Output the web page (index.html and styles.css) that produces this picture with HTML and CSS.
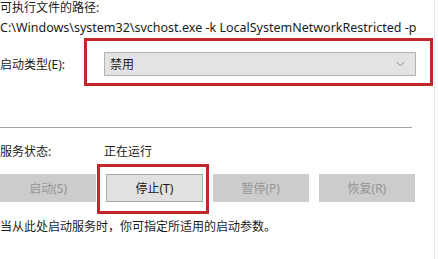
FILE: index.html
```html
<!DOCTYPE html>
<html lang="zh-CN">
<head>
    <meta charset="UTF-8">
    <title>服务属性</title>
    <link rel="stylesheet" href="styles.css">
</head>
<body>
    <div class="dialog">
        <div class="path-label">可执行文件的路径:</div>
        <div class="path">C:\Windows\system32\svchost.exe -k LocalSystemNetworkRestricted -p</div>

        <div class="row type-row">
            <label>启动类型(E):</label>
            <div class="select">
                <span>禁用</span>
                <svg class="chevron" width="9" height="6" viewBox="0 0 9 6"><path d="M0.5 0.8 L4.5 4.8 L8.5 0.8" fill="none" stroke="#8a8a8a" stroke-width="1"/></svg>
            </div>
        </div>

        <div class="divider"></div>

        <div class="row status-row">
            <span>服务状态:</span>
            <span>正在运行</span>
        </div>

        <div class="buttons">
            <button disabled>启动(S)</button>
            <button class="active">停止(T)</button>
            <button disabled>暂停(P)</button>
            <button disabled>恢复(R)</button>
        </div>

        <div class="hint">当从此处启动服务时，你可指定所适用的启动参数。</div>

        <!-- red annotation boxes -->
        <div class="mark mark-type"></div>
        <div class="mark mark-stop"></div>
    </div>
    <div class="edge"></div>
</body>
</html>
```

FILE: styles.css
```css
body {
    margin: 0;
    background: #fff;
    color: #1b1b1b;
    font-family: "Noto Sans", "Noto Sans CJK SC", sans-serif;
    font-size: 12px;
    width: 438px;
    height: 259px;
    overflow: hidden;
    position: relative;
}
.dialog {
    position: relative;
    width: 416px;
    padding-top: 1px;
}
.path-label {
    height: 14px;
    line-height: 14px;
}
.path {
    margin-top: 6px;
    height: 14px;
    line-height: 14px;
    font-size: 12.5px;
    white-space: nowrap;
}
.row {
    display: grid;
    grid-template-columns: 104px 1fr;
    align-items: center;
}
.type-row {
    margin-top: 17px;
}
.select {
    height: 22px;
    background: #e3e3e3;
    border: 1px solid #b3b3b3;
    display: flex;
    align-items: center;
    justify-content: space-between;
    padding: 0 10px 0 5px;
}
.chevron {
    display: block;
}
.divider {
    margin-top: 51px;
    width: 412px;
    height: 1px;
    background: #a5a5a5;
}
.status-row {
    margin-top: 14px;
    height: 16px;
}
.buttons {
    margin-top: 16px;
    width: 415px;
    display: grid;
    grid-template-columns: repeat(4, 1fr);
    gap: 10px;
}
button {
    height: 28px;
    font-family: inherit;
    font-size: 12px;
    border: 1px solid #cccccc;
    background: #cccccc;
    color: #959595;
    padding: 0;
}
button.active {
    background: #e1e1e1;
    border-color: #adadad;
    color: #1b1b1b;
}
.hint {
    margin-top: 17px;
    height: 16px;
    line-height: 16px;
}
.mark {
    position: absolute;
    border: 3px solid #c1272d;
    box-sizing: border-box;
}
.mark-type {
    left: 84px;
    top: 38px;
    width: 349px;
    height: 48px;
}
.mark-stop {
    left: 97px;
    top: 164px;
    width: 112px;
    height: 50px;
}
.edge {
    position: absolute;
    left: 434px;
    top: 0;
    width: 1px;
    height: 259px;
    background: #e6e6e6;
}
```
